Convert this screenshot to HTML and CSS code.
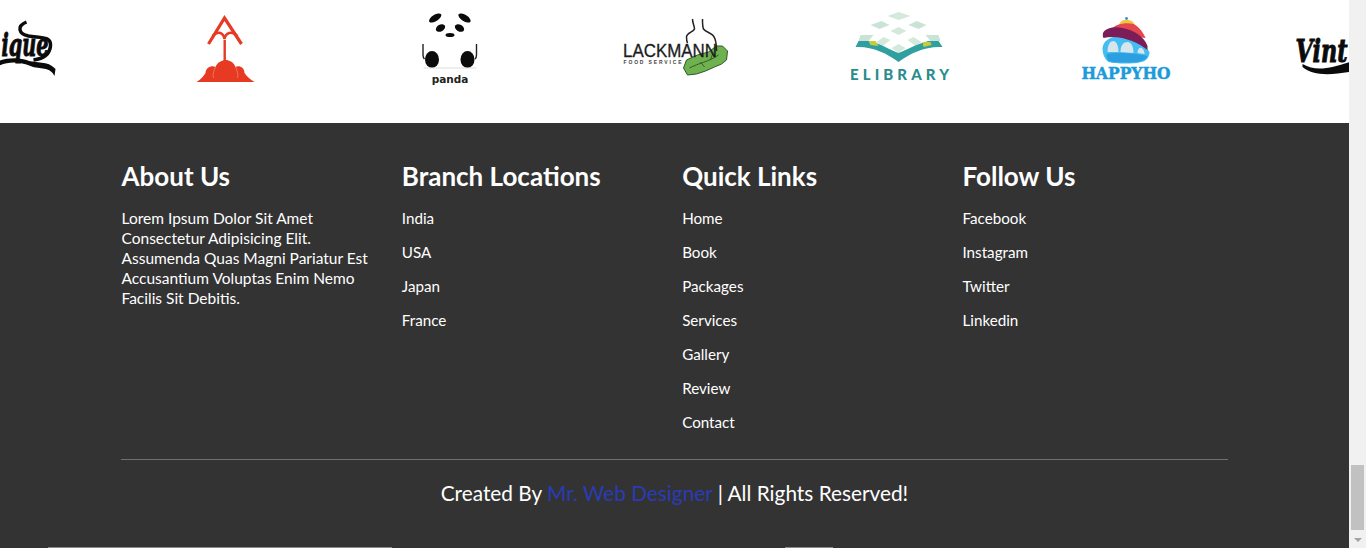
FILE: index.html
```html
<!DOCTYPE html>
<html lang="en">
<head>
<meta charset="utf-8">
<title>Footer</title>
<link rel="stylesheet" href="styles.css">
</head>
<body>
<div class="page">
  <section class="brands">
    <div class="brand">
      <svg class="logo" viewBox="-112.5 0 225 123">
        <path class="ink-line" d="M26 22C16 26 18 34 28 36C40 38 51 36 50 46C49 56 40 59 33 60" />
        <path class="ink" d="M-2 66C8 61 20 62 30 66C40 70 49 66 54 76L55 69C47 60 36 64 26 60C16 57 6 58 -2 61Z" />
        <text class="script" x="1" y="56" textLength="47" lengthAdjust="spacingAndGlyphs">ique</text>
      </svg>
    </div>
    <div class="brand">
      <svg class="logo" viewBox="112.5 0 225 123">
        <path class="red-line" d="M208 44L224 18L241 44" />
        <path class="red-line-thin" d="M212 36C218 30 223 33 224 39C225 33 231 30 237 36" />
        <rect class="red" x="223" y="40" width="2.4" height="21" />
        <path class="red" d="M196 82C201 79 203 76 205 73C205 68 211 65 215 67C217 62 222 60 225 60C229 60 233 62 235 67C239 65 244 68 244 73C246 76 249 79 254 82Z" />
        <path class="cloud-gap" d="M215 67C213 71 212 75 213 78M235 67C237 71 238 75 237 78" />
      </svg>
    </div>
    <div class="brand">
      <svg class="logo" viewBox="337.5 0 225 123">
        <ellipse class="ink" cx="434.7" cy="18" rx="7" ry="3.2" transform="rotate(-32 434.7 18)" />
        <ellipse class="ink" cx="464" cy="18" rx="7" ry="3.2" transform="rotate(32 464 18)" />
        <ellipse class="ink" cx="440" cy="28" rx="5" ry="3.4" transform="rotate(-30 440 28)" />
        <ellipse class="ink" cx="459" cy="28" rx="5" ry="3.4" transform="rotate(30 459 28)" />
        <ellipse class="ink" cx="449.5" cy="35" rx="4.5" ry="2" />
        <ellipse class="ink" cx="431.5" cy="59.5" rx="7" ry="8.5" />
        <ellipse class="ink" cx="467" cy="59.5" rx="7" ry="8.5" />
        <path class="panda-arm" d="M422.5 44V55C422.5 57 423 58 424 59" />
        <path class="panda-arm" d="M476 44V55C476 57 475.5 58 474.5 59" />
        <path class="panda-shadow" d="M423 68H476" />
        <text class="panda-name" x="449.5" y="83" text-anchor="middle">panda</text>
      </svg>
    </div>
    <div class="brand">
      <svg class="logo" viewBox="562.5 0 225 123">
        <path class="leaf" d="M683 68L686 60L697 55L708 52L716 46L722 46L727 51L726 60L721 64L714 67L705 71L696 74L687 75Z" />
        <path class="leaf-vein" d="M689 68C698 63 708 62 718 55M700 62L704 67M710 60L712 54" />
        <path class="fork" d="M692 19C692 23 694 26 694 29C693 32 686 33 686 37C686 39 686 41 687 43" />
        <path class="fork" d="M702 19C702 23 702 27 703 29C705 32 711 33 713 36C716 40 716 45 716 51" />
        <text class="lack-name" x="622.5" y="57" textLength="94" lengthAdjust="spacingAndGlyphs">LACKMANN</text>
        <text class="lack-sub" x="623" y="64" textLength="58">FOOD SERVICE</text>
      </svg>
    </div>
    <div class="brand">
      <svg class="logo" viewBox="787.5 0 225 123">
        <path class="pale" d="M898 12L910 16L898 20L887 16Z" />
        <path class="pale2" d="M881 21L889 25L879 29L870 25Z" />
        <path class="pale2" d="M916 21L926 25L918 29L908 25Z" />
        <path class="pale" d="M898 27L906 31L898 35L890 31Z" />
        <path class="pale2" d="M860 35H873L868 41H858Z" />
        <path class="pale" d="M883 37L890 40L882 46L876 42Z" />
        <path class="pale" d="M913 37L921 42L915 46L907 40Z" />
        <path class="pale2" d="M925 35H938L940 41H930Z" />
        <path class="pale" d="M898 44L905 48L898 53L891 48Z" />
        <path class="teal-band" d="M855 47L858 41L870 41C880 44 890 50 898 53C906 50 916 44 928 41L938 41L942 47C925 46 910 53 898 62C886 53 871 46 855 47Z" />
        <path class="lime" d="M868 41H875L878 46L870 45Z" />
        <path class="lime" d="M922 42H930L931 45L923 47Z" />
        <text class="elib-name" x="849.5" y="80" textLength="99">ELIBRARY</text>
      </svg>
    </div>
    <div class="brand">
      <svg class="logo" viewBox="1012.5 0 225 123">
        <path class="hat-yellow" d="M1119 24C1120 19 1131 18 1134 24L1138 30L1118 28Z" />
        <circle class="hat-top" cx="1126" cy="18.5" r="1.4" />
        <path class="hat-red" d="M1112 29C1114 24 1126 22 1133 24C1139 27 1143 33 1145 38L1110 33Z" />
        <path class="dome" d="M1102 48C1103 40 1112 35 1122 37C1134 39 1146 46 1149 52C1149 57 1146 61 1141 62C1135 64 1115 64 1108 62C1104 59 1102 54 1102 48Z" />
        <path class="hat-purple" d="M1103 32C1106 28 1114 26 1122 28C1134 30 1144 37 1147 46V50C1138 42 1118 34 1103 38C1102 36 1102 34 1103 32Z" />
        <path class="dome-win" d="M1107 52C1107 44 1110 41 1113 41C1116 41 1118 46 1118 52Z" />
        <path class="dome-win" d="M1120 52C1120 45 1123 42 1127 42C1131 42 1133 47 1133 53Z" />
        <path class="dome-win" d="M1137 53C1137 49 1139 47 1141 48C1143 49 1144 51 1144 54Z" />
        <path class="dome-deep" d="M1106 54C1116 52 1135 53 1147 56C1146 58 1144 60 1141 61C1135 63 1115 63 1108 61C1107 59 1106 57 1106 54Z" />
        <text class="happy-name" x="1081" y="79" textLength="89" lengthAdjust="spacingAndGlyphs">HAPPYHO</text>
      </svg>
    </div>
    <div class="brand">
      <svg class="logo" viewBox="1237.5 0 225 123">
        <path class="ink" d="M1302 64C1316 72 1330 68 1349 62V72C1330 75 1312 76 1302 67Z" />
        <text class="script" x="1295" y="62" textLength="52" lengthAdjust="spacingAndGlyphs">Vint</text>
      </svg>
    </div>
  </section>

  <footer class="footer">
    <div class="columns">
      <div class="col">
        <h3>About Us</h3>
        <p>Lorem Ipsum Dolor Sit Amet<br>Consectetur Adipisicing Elit.<br>Assumenda Quas Magni Pariatur Est<br>Accusantium Voluptas Enim Nemo<br>Facilis Sit Debitis.</p>
      </div>
      <div class="col">
        <h3>Branch Locations</h3>
        <a href="#">India</a>
        <a href="#">USA</a>
        <a href="#">Japan</a>
        <a href="#">France</a>
      </div>
      <div class="col">
        <h3>Quick Links</h3>
        <a href="#">Home</a>
        <a href="#">Book</a>
        <a href="#">Packages</a>
        <a href="#">Services</a>
        <a href="#">Gallery</a>
        <a href="#">Review</a>
        <a href="#">Contact</a>
      </div>
      <div class="col">
        <h3>Follow Us</h3>
        <a href="#">Facebook</a>
        <a href="#">Instagram</a>
        <a href="#">Twitter</a>
        <a href="#">Linkedin</a>
      </div>
    </div>
    <div class="credit">Created By <span class="author">Mr. Web Designer</span> | All Rights Reserved!</div>
    <div class="edge">
      <span class="edge-a"></span>
      <span class="edge-b"></span>
    </div>
  </footer>
</div>
<div class="scrollbar">
  <div class="thumb"></div>
  <div class="arrow"></div>
</div>
</body>
</html>
```
FILE: styles.css
```css
* { box-sizing: border-box; }
html, body { margin: 0; padding: 0; }
body {
  display: flex;
  width: 1366px;
  height: 548px;
  overflow: hidden;
  background: #fff;
  font-family: "Lato", "Noto Sans", sans-serif;
}
.page { width: 1349px; flex: none; overflow: hidden; display: flex; flex-direction: column; }

.brands { display: flex; height: 123px; margin-left: -112.5px; background: #fff; }
.brand { flex: none; width: 225px; height: 123px; }
.logo { display: block; width: 225px; height: 123px; overflow: hidden; }

.ink { fill: #0b0b0b; }
.ink-line { fill: none; stroke: #0b0b0b; stroke-width: 3.5; }
.script { font: italic 700 32px "DejaVu Serif", serif; fill: #0b0b0b; stroke: #0b0b0b; stroke-width: 1; }
.red { fill: #e63a22; }
.red-line { fill: none; stroke: #e63a22; stroke-width: 3.2; }
.red-line-thin { fill: none; stroke: #e63a22; stroke-width: 2.4; }
.cloud-gap { fill: none; stroke: #f08a76; stroke-width: .7; }
.panda-arm { fill: none; stroke: #222; stroke-width: 1.4; }
.panda-shadow { stroke: #ddd; stroke-width: 1; }
.panda-name { font: 700 10.5px "DejaVu Sans", sans-serif; fill: #222; }
.leaf { fill: #6fb04f; stroke: #2c5a2a; stroke-width: 1; }
.leaf-vein { fill: none; stroke: #244d22; stroke-width: .8; }
.fork { fill: none; stroke: #222; stroke-width: 1.5; }
.lack-name { font: 400 18px "Liberation Sans", sans-serif; fill: #1c1c1c; stroke: #1c1c1c; stroke-width: .3; }
.lack-sub { font: 700 5px "Liberation Sans", sans-serif; fill: #444; }
.pale { fill: #d3e9dc; }
.pale2 { fill: #c9e3d7; }
.teal-band { fill: #2fa09f; }
.lime { fill: #c9cc3a; }
.elib-name { font: 900 15px "Lato", sans-serif; fill: #2a8c8c; }
.hat-yellow { fill: #f4c445; }
.hat-top { fill: #3b8fb5; }
.hat-red { fill: #e4484e; }
.hat-purple { fill: #7b1d58; }
.dome { fill: #45bdf0; }
.dome-win { fill: #d5e6ee; }
.dome-deep { fill: #2b9fe0; }
.happy-name { font: 700 17px "DejaVu Serif", serif; fill: #1c9bd8; stroke: #1c9bd8; stroke-width: .5; }

.footer {
  flex: 1;
  background: #333;
  color: #fff;
  padding-top: 36px;
  display: flex;
  flex-direction: column;
}
.columns {
  width: 1107px;
  margin: 0 auto;
  display: grid;
  grid-template-columns: repeat(4, 1fr);
  column-gap: 14.3px;
  padding-bottom: 20px;
  border-bottom: 1px solid #6f6f6f;
}
.col { padding-left: 0.5px; }
.col h3 {
  margin: 0 0 8px;
  font-size: 26px;
  line-height: 34px;
  font-weight: 700;
}
.col p { margin: 14.5px 0 0; padding-bottom: 0; font-size: 15.5px; line-height: 20px; }
.col a {
  display: block;
  padding: 5.5px 0 6.5px;
  font-size: 15.2px;
  line-height: 22px;
  color: #fff;
  text-decoration: none;
}
.credit {
  margin-top: 19px;
  text-align: center;
  font-size: 20.8px;
  line-height: 27px;
}
.author { color: #2a3cb5; }
.edge { margin-top: auto; height: 1px; display: flex; padding-left: 48px; }
.edge-a { width: 344px; background: #8a8a8a; }
.edge-b { width: 48px; margin-left: 393px; background: #8a8a8a; }

.scrollbar {
  width: 17px;
  flex: none;
  background: #f1f1f1;
  display: flex;
  flex-direction: column;
  align-items: center;
  padding-top: 465px;
}
.thumb { width: 13px; height: 65px; background: #c1c1c1; }
.arrow {
  margin-top: 8px;
  width: 0;
  height: 0;
  border-left: 4px solid transparent;
  border-right: 4px solid transparent;
  border-top: 4px solid #a3a3a3;
}
```
